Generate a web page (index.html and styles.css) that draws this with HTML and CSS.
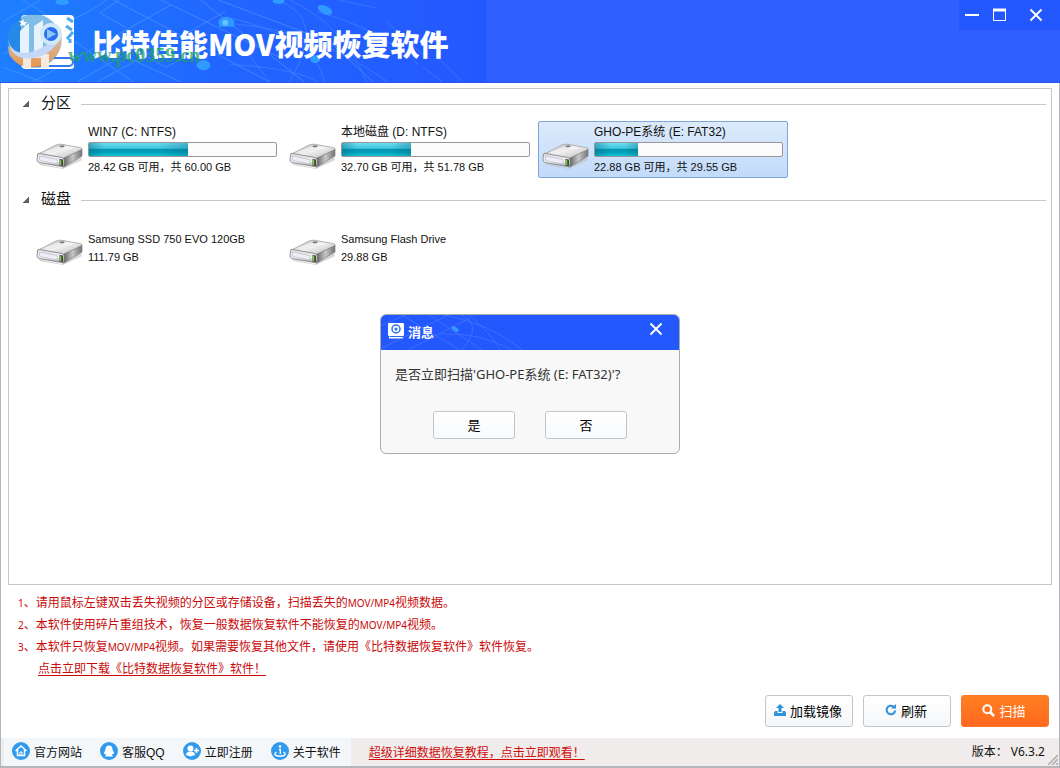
FILE: index.html
```html
<!DOCTYPE html>
<html lang="zh-CN">
<head>
<meta charset="utf-8">
<title>比特佳能MOV视频恢复软件</title>
<link rel="stylesheet" href="styles.css">
</head>
<body>
<svg class="defs" aria-hidden="true">
  <defs>
    <linearGradient id="metal-top" x1="0" y1="0" x2="1" y2="1"><stop offset="0" stop-color="#a9a9a9"/><stop offset=".45" stop-color="#f1f1f1"/><stop offset="1" stop-color="#b9b9b9"/></linearGradient>
    <linearGradient id="metal-front" x1="0" y1="0" x2="0" y2="1"><stop offset="0" stop-color="#d8d8e0"/><stop offset=".6" stop-color="#f4f4fa"/><stop offset="1" stop-color="#8d8d92"/></linearGradient>
    <linearGradient id="metal-side" x1="0" y1="0" x2="1" y2="0"><stop offset="0" stop-color="#5e5e5e"/><stop offset=".5" stop-color="#c6c6c6"/><stop offset="1" stop-color="#747474"/></linearGradient>
    <linearGradient id="mark-gold" x1="0" y1="0" x2="0" y2="1"><stop offset="0" stop-color="#c9c4bd"/><stop offset="1" stop-color="#e8954a"/></linearGradient>
    <symbol id="drive" viewBox="0 0 48 28">
      <path d="M3 21L25 26L45 15L46 18L27 27L4 23Z" fill="#bdbdbd" opacity=".6"/>
      <path d="M1.500 12.500L20 3Q24 1.500 27 2.500L44 5.500Q47 6 46 8L27 17L3 13Z" fill="url(#metal-top)" stroke="#999" stroke-width=".7"/>
      <path d="M27 16.500L46 7.500V14L28 25Z" fill="url(#metal-side)" stroke="#777" stroke-width=".6"/>
      <path d="M1.500 12Q2 11 4 11.500L26 15.500Q28 16 28 18V25L3 20.500Q1 20 1 18Z" fill="url(#metal-front)" stroke="#7f7f7f" stroke-width=".8"/>
      <path d="M3.500 14L21 17.500V22L3.500 18.500Z" fill="#eeeef8" stroke="#b5b5c0" stroke-width=".6"/>
      <path d="M23.500 17L27 17.500V24L23.500 23.500Z" fill="#3d4a35"/><path d="M24.500 18V23" stroke="#79c942" stroke-width="1.500"/>
      <ellipse cx="26" cy="4.500" rx="2.500" ry="1" fill="#555"/><path d="M9 10.500L25 5L36 6.500" fill="none" stroke="#fff" opacity=".65"/>
    </symbol>
    <symbol id="mesh" viewBox="0 0 486 83">
      <g fill="none" stroke="#62a5ff" opacity=".5">
        <path d="M0 22L38 0M0 55L90 10L105 0M30 83L170 5M95 83L225 12M118 0L98 13L125 28M70 40L132 83M112 0L270 83M130 60L180 83M160 0L280 58M200 0L305 83M20 0L60 25M0 68L40 83M218 0L330 42L375 83M75 83L132 50L165 68L200 50"/>
        <path d="M232 24Q315 30 390 83M230 65Q300 70 318 83M245 50L270 83M290 83Q330 15 275 0M290 0Q345 25 368 83M325 83Q320 40 230 18M340 0L377 8M425 68L445 83M437 55L465 83M388 22L425 55M318 12Q380 28 420 65" opacity=".7"/>
      </g>
      <g fill="#2f9aff"><path d="M218 21Q226 13 234 21V27H219Z"/><ellipse cx="326" cy="10" rx="8" ry="4" transform="rotate(25 326 10)"/><ellipse cx="203" cy="66" rx="7" ry="5"/><ellipse cx="316" cy="60" rx="5" ry="4"/><ellipse cx="60" cy="2" rx="7" ry="3"/><ellipse cx="279" cy="1" rx="6" ry="3"/></g>
      <circle cx="225" cy="23" r="3" fill="#69bfff"/>
    </symbol>
    <symbol id="cross" viewBox="0 0 14 14"><path d="M1.500 1.500L12.500 12.500M12.500 1.500L1.500 12.500" stroke="#fff" stroke-width="1.800" fill="none"/></symbol>
  </defs>
</svg>
<div class="window">
  <header class="banner">
    <svg class="banner-mesh" aria-hidden="true"><use href="#mesh"/></svg>
    <svg class="logo" viewBox="0 0 76 66" aria-hidden="true">
      <rect x="21" y="7" width="53" height="43" rx="4" fill="#fff"/>
      <path d="M21 49H74V58Q74 61 71 61H26Q21 61 21 56Z" fill="#fff"/><rect x="25" y="50" width="48" height="8" rx="4" fill="#fff" stroke="#3479ef" stroke-width="2"/>
      <circle cx="34" cy="33" r="27" fill="#2c91d5" opacity=".6"/>
      <path d="M8 38Q20 50 42 44Q56 38 61 26Q65 45 46 56Q21 66 9 46Z" fill="url(#mark-gold)"/>
      <path d="M20 23L29 15V45H20ZM34 18L43 12V43H34Z" fill="#e8f2fc"/>
      <path d="M23 46H49V60H41V50H31V60H23Z" fill="#f6e9de"/>
      <path d="M8 30Q10 45 25 45Q44 43 61 24Q58 42 39 49Q10 56 8 30Z" fill="#c4d7f6"/>
      <circle cx="51" cy="26" r="9" fill="#2a6ff3" stroke="#d1e7fa" stroke-width="4"/>
      <path d="M47 21L56 26L47 31Z" fill="#8fc5f5"/>
      <path d="M67 10L73 14M66 18L72 22M67 31L73 24M70 31V35" stroke="#4cacec" stroke-width="3"/>
      <path d="M23 11L24 14L27 14L25 16L26 18L23 17L20 18L21 15L19 13L22 13Z" fill="#fff"/>
    </svg>
    <h1 class="brand">比特佳能MOV视频恢复软件<span class="site-mark">www.pc0359.cn</span></h1>
    <div class="window-tools">
      <button class="tool" type="button" aria-label="最小化"><svg width="14" height="14" viewBox="0 0 14 14"><path d="M0 7H14" stroke="#fff" stroke-width="2"/></svg></button>
      <button class="tool" type="button" aria-label="最大化"><svg width="14" height="14" viewBox="0 0 14 14"><path d="M.5 2V12.500H12.500V2M0 2H13" fill="none" stroke="#fff"/><path d="M0 2H13" stroke="#fff" stroke-width="3"/></svg></button>
      <button class="tool tool-close" type="button" aria-label="关闭"><svg width="14" height="14"><use href="#cross"/></svg></button>
    </div>
  </header>

  <main class="panel">
    <section class="group">
      <h2 class="group-title"><svg class="caret" viewBox="0 0 6 6"><path d="M6 0V6H0Z" fill="#666" stroke="#333" stroke-width=".5"/></svg>分区</h2>
      <div class="volumes">
        <article class="volume"><svg class="drive-icon"><use href="#drive"/></svg><div class="details"><h3>WIN7 (C: NTFS)</h3><div class="bar"><div class="used" style="width:53%"></div></div><p>28.42 GB 可用，共 60.00 GB</p></div></article>
        <article class="volume"><svg class="drive-icon"><use href="#drive"/></svg><div class="details"><h3>本地磁盘 (D: NTFS)</h3><div class="bar"><div class="used" style="width:37%"></div></div><p>32.70 GB 可用，共 51.78 GB</p></div></article>
        <article class="volume selected"><svg class="drive-icon"><use href="#drive"/></svg><div class="details"><h3>GHO-PE系统 (E: FAT32)</h3><div class="bar"><div class="used" style="width:23%"></div></div><p>22.88 GB 可用，共 29.55 GB</p></div></article>
      </div>
    </section>
    <section class="group">
      <h2 class="group-title"><svg class="caret" viewBox="0 0 6 6"><path d="M6 0V6H0Z" fill="#666" stroke="#333" stroke-width=".5"/></svg>磁盘</h2>
      <div class="volumes">
        <article class="volume"><svg class="drive-icon"><use href="#drive"/></svg><div class="details disk"><p>Samsung SSD 750 EVO 120GB</p><p>111.79 GB</p></div></article>
        <article class="volume"><svg class="drive-icon"><use href="#drive"/></svg><div class="details disk"><p>Samsung Flash Drive</p><p>29.88 GB</p></div></article>
      </div>
    </section>
  </main>

  <section class="notes">
    <p><span class="latin">1</span>、请用鼠标左键双击丢失视频的分区或存储设备，扫描丢失的<span class="latin">MOV/MP4</span>视频数据。</p>
    <p><span class="latin">2</span>、本软件使用碎片重组技术，恢复一般数据恢复软件不能恢复的<span class="latin">MOV/MP4</span>视频。</p>
    <p><span class="latin">3</span>、本软件只恢复<span class="latin">MOV/MP4</span>视频。如果需要恢复其他文件，请使用《比特数据恢复软件》软件恢复。</p>
    <p class="download"><a href="#">点击立即下载《比特数据恢复软件》软件！</a></p>
  </section>

  <div class="actions">
    <button class="action" type="button"><svg width="12" height="12" viewBox="0 0 12 12"><path d="M6 0L10 4H7.500V8H4.500V4H2Z" fill="#2f90dc"/><path d="M1 7H3.500V9H8.500V7H11L12 9V12H0V9Z" fill="#2f90dc"/></svg>加载镜像</button>
    <button class="action" type="button"><svg width="12" height="12" viewBox="0 0 12 12"><path d="M8.500 2.500A4.300 4.300 0 1 0 10.200 6.500" fill="none" stroke="#2f90dc" stroke-width="2"/><path d="M6 4.500H11V0Z" fill="#2f90dc"/></svg>刷新</button>
    <button class="action primary" type="button"><svg width="13" height="13" viewBox="0 0 13 13"><circle cx="5.300" cy="5.300" r="4" fill="none" stroke="#fff" stroke-width="2"/><path d="M8 8L12 12" stroke="#fff" stroke-width="2.500"/></svg>扫描</button>
  </div>

  <footer class="status">
    <nav class="links">
      <a href="#"><svg width="18" height="18" viewBox="0 0 18 18"><circle cx="9" cy="9" r="9" fill="#329aec"/><path d="M3.500 9L9 4L14.500 9M5.500 8V13.500H12.500V8" fill="none" stroke="#fff" stroke-width="1.500"/><path d="M8 13V10H10V13" fill="none" stroke="#fff"/></svg>官方网站</a>
      <a href="#"><svg width="18" height="18" viewBox="0 0 18 18"><circle cx="9" cy="9" r="9" fill="#329aec"/><path d="M5.500 7.500Q5.500 3.500 9 3.500Q12.500 3.500 12.500 7.500L14 11Q14 12.500 12.500 12L12 13L13 14.500H5L6 13L5.500 12Q4 12.500 4 11Z" fill="#fff"/></svg>客服QQ</a>
      <a href="#"><svg width="18" height="18" viewBox="0 0 18 18"><circle cx="9" cy="9" r="9" fill="#329aec"/><circle cx="7.500" cy="6.500" r="3" fill="#fff"/><path d="M3 13Q3 9.500 7.500 9.500Q12 9.500 12 13L7.500 14.500Z" fill="#fff"/><path d="M13.500 6V11M11 8.500H16" stroke="#fff" stroke-width="1.500"/></svg>立即注册</a>
      <a href="#"><svg width="18" height="18" viewBox="0 0 18 18"><circle cx="9" cy="9" r="9" fill="#329aec"/><circle cx="9" cy="4.500" r="1.300" fill="#fff"/><path d="M8 7.500H9.300V12M5.500 10Q2.500 12 5 13.500Q9 15 13 13.500Q15.500 12 12.500 10" fill="none" stroke="#fff" stroke-width="1.400"/></svg>关于软件</a>
    </nav>
    <a class="tutorial" href="#">超级详细数据恢复教程，点击立即观看！</a>
    <span class="version">版本： V6.3.2</span>
    <svg class="grip" width="10" height="10" viewBox="0 0 10 10" aria-hidden="true"><path d="M0 10L10 0M4 10L10 4M8 10L10 8" stroke="#aaa" stroke-width="1.500"/></svg>
  </footer>
</div>

<div class="overlay">
  <div class="message" role="dialog" aria-labelledby="message-title">
    <div class="message-head">
      <svg class="message-mesh" viewBox="0 0 144 36" aria-hidden="true"><g fill="none" stroke="#5b91ff" opacity=".4"><path d="M0 12L28 0M0 35L70 0M28 36L90 4M20 0L80 36M48 0L102 36M60 0Q112 10 142 36M82 36Q104 10 80 0M88 0Q112 20 120 36M60 20Q100 18 132 36"/></g><ellipse cx="75" cy="15" rx="4" ry="2" transform="rotate(35 75 15)" fill="#3098ff"/></svg>
      <svg width="16" height="16" viewBox="0 0 16 16" aria-hidden="true"><rect width="16" height="13" rx="1" fill="#fff"/><circle cx="8" cy="6" r="4" fill="none" stroke="#246ff2" stroke-width="1.500"/><circle cx="8" cy="6" r="1.500" fill="#246ff2"/><path d="M1 14.500H15" stroke="#fff" stroke-width="2"/><path d="M2 13.500H15" stroke="#246ff2"/></svg>
      <h2 id="message-title">消息</h2>
      <button class="close" type="button" aria-label="关闭"><svg width="14" height="14"><use href="#cross"/></svg></button>
    </div>
    <p class="question">是否立即扫描'GHO-PE系统 (E: FAT32)'?</p>
    <div class="choices"><button type="button">是</button><button type="button">否</button></div>
  </div>
</div>
</body>
</html>
```
FILE: styles.css
```css
* { box-sizing: border-box; }
body { margin: 0; font: 12px "Liberation Sans", "Noto Sans CJK SC", sans-serif; color: #111; }
h1, h2, h3, p { margin: 0; font-weight: normal; }
button { font: inherit; padding: 0; cursor: pointer; }
svg { flex: none; }
.defs { position: absolute; width: 0; height: 0; }

.window { display: flex; flex-direction: column; min-height: 100vh; background: #fff; border: solid #b4b6ba; border-width: 0 1px 2px; }
.banner { position: relative; display: flex; align-items: flex-start; height: 83px; margin: 0 -1px; background: linear-gradient(90deg, #1e7fff 0, #2165ff 230px, #2458ff 480px, #2458ff 486px, #305eff 487px); border-bottom: 1px solid #2b56e8; }
.banner-mesh { position: absolute; left: 0; top: 0; width: 486px; height: 82px; }
.logo { position: relative; width: 76px; height: 66px; margin-top: 8px; }
.brand { position: relative; margin: 21px 0 0 16px; font: 900 29px/44px "Noto Sans CJK SC", sans-serif; color: #fff; white-space: nowrap; }
.site-mark { position: absolute; left: -24px; top: 24px; font: bold 20px/20px "Liberation Serif", serif; color: #20a15f; opacity: .75; }
.window-tools { display: flex; gap: 14px; width: 101px; height: 30px; margin-left: auto; padding: 0 17px 0 6px; background: #2458ff; }
.tool { display: flex; align-items: center; border: 0; background: none; }
.tool-close { margin-left: auto; }

.panel { flex: 1; margin: 5px 7px 0; padding: 4px 5px 0 16px; border: 1px solid #c5c8ca; }
.group { margin-bottom: 11px; }
.group-title { display: flex; align-items: center; height: 20px; margin-bottom: 8px; font-size: 15px; line-height: 20px; }
.group-title::after { content: ""; flex: 1; height: 1px; margin-left: 10px; margin-top: 2px; background: #c8c8c8; }
.caret { width: 6px; height: 6px; margin: 2px 12px 0 -2px; }
.volumes { display: flex; flex-wrap: wrap; gap: 3px; padding-left: 7px; }
.volume { display: flex; width: 250px; height: 57px; padding: 1px 4px; border: 1px solid transparent; border-radius: 2px; }
.volume.selected { border-color: #7da7d8; background: linear-gradient(#dceafb, #c2dbfa); }
.drive-icon { width: 48px; height: 28px; margin: 19px 4px 0 -1px; }
.details { width: 189px; }
.details h3 { font-size: 12px; line-height: 18px; }
.details p { font-size: 11px; line-height: 18px; white-space: nowrap; }
.details.disk { padding-top: 11px; }
.bar { height: 15px; margin: 1px 0; border: 1px solid #98989c; border-radius: 2px; background: #fbfbfb; }
.used { height: 100%; background: linear-gradient(90deg, #04647f66 0, #04647f00 15px, #04647f00 70%, #04647f55 100%), linear-gradient(#6fdcf0 0, #3cc4de 42%, #0891b0 46%, #00a4be 75%, #18c6d4 100%); }

.notes { padding: 7px 17px 0; color: #c80909; line-height: 22px; }
.notes a { color: inherit; text-underline-offset: 2px; }
.latin { font-family: "Noto Sans", sans-serif; font-size: 10px; }
.download { padding-left: 20px; }

.actions { display: flex; justify-content: flex-end; gap: 10px; padding: 15px 10px 11px; }
.action { display: flex; align-items: center; justify-content: center; gap: 4px; width: 88px; height: 32px; padding: 0 2px 2px 0; border: 1px solid #c4c6ca; border-radius: 3px; background: linear-gradient(#fff, #f5f7f9); font-size: 13px; color: #000; }
.action.primary { border-color: #ff7427; background: linear-gradient(#ff8020, #ff6820); color: #fff; }

.status { position: relative; display: flex; align-items: center; height: 28px; background: #f0eceb; padding-left: 3px; }
.links { display: flex; gap: 18px; align-items: center; height: 28px; padding: 0 10px 2px 8px; background: #f4f7fa; }
.links a { display: flex; align-items: center; gap: 4px; color: #111; text-decoration: none; white-space: nowrap; }
.tutorial { margin-left: 18px; padding-bottom: 2px; color: #d00d0d; text-underline-offset: 2px; }
.version { margin-left: auto; margin-right: 14px; padding-bottom: 2px; font-family: "Noto Sans", "Noto Sans CJK SC", sans-serif; }
.grip { position: absolute; right: 1px; bottom: 1px; }

.overlay { position: absolute; inset: 0; display: grid; place-items: center; pointer-events: none; }
.message { width: 300px; overflow: hidden; border: 1px solid #aaacb0; border-radius: 6px; background: #f8f8f8; pointer-events: auto; }
.message-head { position: relative; display: flex; align-items: center; gap: 4px; height: 36px; margin: -1px -1px 0; padding: 0 17px 2px 8px; background: #2458ff; color: #fff; }
.message-mesh { position: absolute; left: 0; top: 0; width: 144px; height: 36px; }
.message-head h2 { font-size: 13px; font-weight: bold; }
.close { display: flex; margin-left: auto; padding-bottom: 4px; border: 0; background: none; }
.question { padding: 14px 14px 0; font: 13px/20px "Noto Sans", "Noto Sans CJK SC", sans-serif; color: #333; }
.choices { display: flex; justify-content: center; gap: 30px; padding: 27px 0 14px; }
.choices button { width: 82px; height: 28px; padding-bottom: 2px; border: 1px solid #c2c5cb; border-radius: 3px; background: linear-gradient(#fff, #f7f9fb); font-size: 13px; color: #000; }
```
